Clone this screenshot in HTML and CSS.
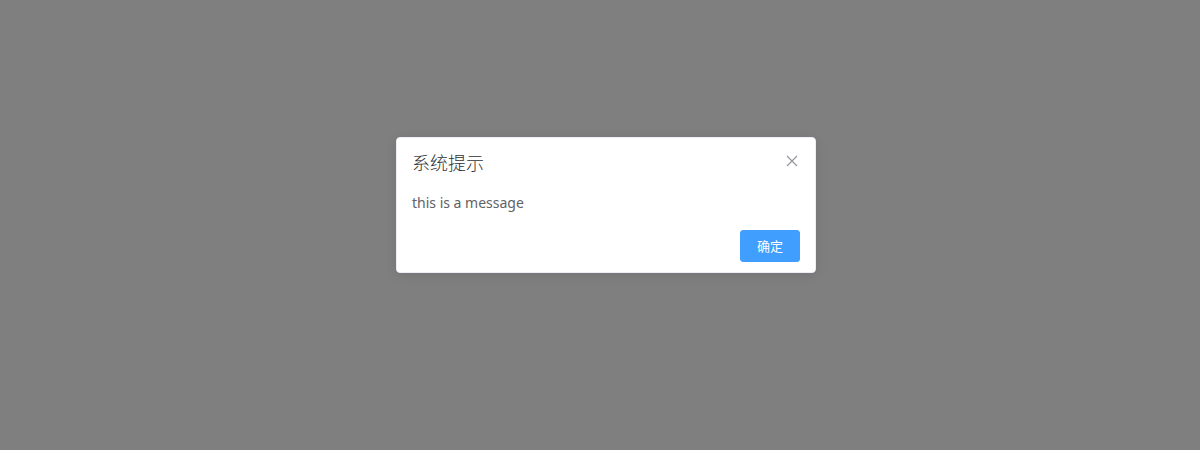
FILE: index.html
```html
<!DOCTYPE html>
<html lang="zh">
<head>
<meta charset="utf-8">
<title>系统提示</title>
<link rel="stylesheet" href="styles.css">
</head>
<body>
<div class="overlay">
  <div class="msgbox" role="dialog">
    <div class="msgbox-header">
      <span class="msgbox-title">系统提示</span>
      <button class="msgbox-close" aria-label="Close">
        <svg width="12" height="12" viewBox="0 0 12 12"><path d="M1 1 L11 11 M11 1 L1 11" stroke="#909399" stroke-width="1.1" fill="none"/></svg>
      </button>
    </div>
    <div class="msgbox-content">this is a message</div>
    <div class="msgbox-btns">
      <button class="btn-primary">确定</button>
    </div>
  </div>
</div>
</body>
</html>
```
FILE: styles.css
```css
html, body {
  margin: 0;
  padding: 0;
  height: 100%;
}
body {
  background: #fff;
  font-family: "Noto Sans", "Noto Sans CJK SC", sans-serif;
}
.overlay {
  height: 100%;
  box-sizing: border-box;
  background: rgba(0, 0, 0, 0.5);
  display: flex;
  justify-content: center;
  align-items: center;
  padding-bottom: 41px;
  padding-left: 12px;
}
.msgbox {
  position: relative;
  width: 420px;
  box-sizing: border-box;
  padding-bottom: 10px;
  background: #fff;
  border: 1px solid #ebeef5;
  border-radius: 4px;
  box-shadow: 0 2px 12px rgba(0, 0, 0, 0.1);
}
.msgbox-header {
  padding: 15px 15px 10px;
}
.msgbox-title {
  display: block;
  font-size: 18px;
  line-height: 18px;
  color: #303133;
  font-family: "Noto Sans CJK SC", sans-serif;
  font-weight: 300;
}
.msgbox-close {
  position: absolute;
  top: 17px;
  right: 17px;
  padding: 0;
  margin: 0;
  border: 0;
  background: none;
  width: 12px;
  height: 12px;
  display: flex;
}
.msgbox-content {
  padding: 10px 15px;
  font-size: 14px;
  line-height: 24px;
  color: #606266;
}
.msgbox-btns {
  padding: 5px 15px 0;
  display: flex;
  justify-content: flex-end;
}
.btn-primary {
  height: 32px;
  padding: 0 15px;
  border: 1px solid #409eff;
  background: #409eff;
  color: #fff;
  border-radius: 3px;
  font-size: 13px;
  font-family: "Noto Sans CJK SC", sans-serif;
  width: 60px;
}
```
